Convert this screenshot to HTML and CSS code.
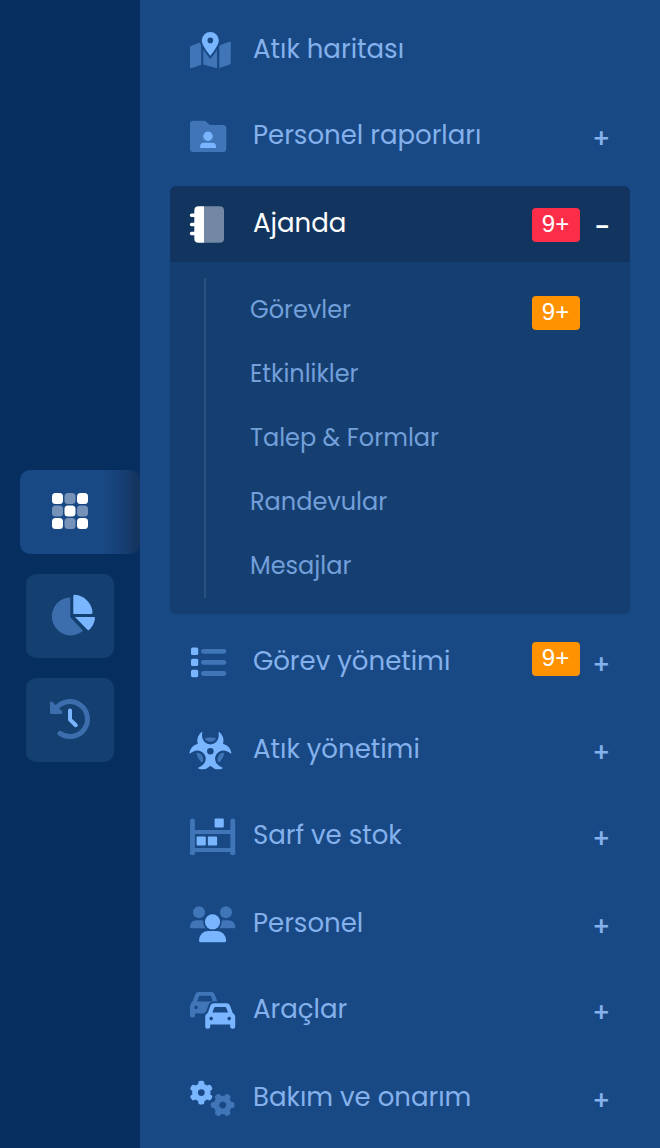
FILE: index.html
```html
<!DOCTYPE html>
<html lang="tr">
<head>
    <meta charset="UTF-8">
    <meta name="viewport" content="width=device-width, initial-scale=1.0">
    <title>Menü</title>
    <link rel="stylesheet" href="styles.css">
</head>
<body>
    <div class="rail">
        <a class="railBtn active">
            <svg width="36" height="36" viewBox="0 0 36 36">
                <g class="light">
                    <rect x="0" y="0" width="11" height="11" rx="3.5"/><rect x="25" y="0" width="11" height="11" rx="3.5"/>
                    <rect x="12.5" y="12.5" width="11" height="11" rx="3.5"/>
                    <rect x="0" y="25" width="11" height="11" rx="3.5"/><rect x="25" y="25" width="11" height="11" rx="3.5"/>
                </g>
                <g class="dim">
                    <rect x="12.5" y="0" width="11" height="11" rx="3.5"/><rect x="0" y="12.5" width="11" height="11" rx="3.5"/>
                    <rect x="25" y="12.5" width="11" height="11" rx="3.5"/><rect x="12.5" y="25" width="11" height="11" rx="3.5"/>
                </g>
            </svg>
        </a>
        <a class="railBtn">
            <svg width="50" height="48" viewBox="0 0 50 48">
                <path class="dim" d="M22.8 5.5Q24.3 5.3 24.3 6.8V25.3L36.4 38Q37.2 38.9 36.2 39.6A19 19 0 1 1 22.8 5.5Z"/>
                <path class="light" d="M27.3 4.2Q27.3 2.7 28.8 2.8A19.2 19.2 0 0 1 46.6 20.6Q46.7 22 45.3 22H27.3Z"/>
                <path class="light" d="M29 25H47.8Q49.2 25 49 26.4A19.5 19.5 0 0 1 43.3 37.7Q42.3 38.6 41.4 37.7Z"/>
            </svg>
        </a>
        <a class="railBtn">
            <svg width="50" height="48" viewBox="0 0 50 48">
                <path class="dimLine" d="M10 12.5A17.5 17.5 0 1 1 14 37.4" stroke-width="5"/>
                <path class="dim" d="M4 7Q4.2 4.8 6.4 6L16 15.2Q17 17.8 14.8 18H5.6Q4 18 4 16.4Z"/>
                <path class="lightLine" d="M24 14.6V23.6L29.8 29.2" stroke-width="4"/>
            </svg>
        </a>
    </div>
    <ul class="menu">
        <li class="item">
            <svg class="icon" viewBox="0 0 46 40">
                <path class="dim" d="M0 17.2Q0 16.3.9 15.9L11.2 12V34.8L1.4 38.2Q0 38.6 0 37.2ZM13.3 12L27 16V38.2L13.3 34.4ZM29.3 15.4L39.3 11.8Q40.8 11.4 40.8 12.8V33Q40.8 34 39.8 34.4L29.3 38Z"/>
                <path class="light cut" d="M20.3 25.7C18 22.8 11.8 15 11.8 10.4A8.5 8.4 0 0 1 28.8 10.4C28.8 15 22.6 22.8 20.3 25.7Z"/>
                <circle class="hole" cx="20.3" cy="10.4" r="2.8"/>
            </svg>
            <span class="text">Atık haritası</span>
        </li>
        <li class="item">
            <svg class="icon" viewBox="0 -1 46 40">
                <path class="dim" d="M3.5 3.7H14Q15.4 3.7 16.5 4.8L18.6 7Q19.6 8 21 8H33Q36.3 8 36.3 11.3V31.7Q36.3 35 33 35H3.5Q0 35 0 31.7V7Q0 3.7 3.5 3.7Z"/>
                <circle class="light" cx="18" cy="19.3" r="4.7"/>
                <path class="light" d="M14 25.7H22Q26 25.7 26.2 30Q26.2 31 25.2 31H11Q10 31 10 30Q10.2 25.7 14 25.7Z"/>
            </svg>
            <span class="text">Personel raporları</span>
            <span class="sign">+</span>
        </li>
        <li class="group">
            <div class="item open">
                <svg class="icon" viewBox="0 0 46 40">
                    <path class="dim" d="M14 2.2H29.7Q34 2.2 34 6.5V34.5Q34 38.8 29.7 38.8H14Z"/>
                    <path class="light" d="M8.6 2.2H14V38.8H8.6Q4.3 38.8 4.3 34.5V6.5Q4.3 2.2 8.6 2.2Z"/>
                    <path class="lightLine" d="M1.5 11.2H7M1.5 20.5H7M1.5 29.5H7" stroke-width="3.4"/>
                </svg>
                <span class="text">Ajanda</span>
                <span class="badge red">9+</span>
                <span class="sign minus">-</span>
            </div>
            <ul class="sub">
                <li>Görevler<span class="badge orange">9+</span></li>
                <li>Etkinlikler</li>
                <li>Talep &amp; Formlar</li>
                <li>Randevular</li>
                <li>Mesajlar</li>
            </ul>
        </li>
        <li class="item">
            <svg class="icon" viewBox="0 -.6 46 40">
                <g class="light">
                    <rect x="1" y="5" width="7.2" height="7.4" rx="1.6"/><rect x="1" y="16.1" width="7.2" height="7.4" rx="1.6"/><rect x="1" y="27.2" width="7.2" height="7.4" rx="1.6"/>
                </g>
                <g class="dim">
                    <rect x="11" y="6.3" width="25.3" height="4.8" rx="2.4"/><rect x="11" y="17.4" width="25.3" height="4.8" rx="2.4"/><rect x="11" y="28.5" width="25.3" height="4.8" rx="2.4"/>
                </g>
            </svg>
            <span class="text">Görev yönetimi</span>
            <span class="badge orange up">9+</span>
            <span class="sign">+</span>
        </li>
        <li class="item">
            <svg class="icon" viewBox="0 0 46 40">
                <g transform="translate(20.4 21.2) scale(.94)">
                    <g class="dim">
                        <path id="seg" d="M-5.8-13.2Q-5-14.8 0-14.8Q5-14.8 5.8-13.2Q4.2-10 0-10Q-4.2-10-5.8-13.2Z"/>
                        <use href="#seg" transform="rotate(120)"/>
                        <use href="#seg" transform="rotate(240)"/>
                    </g>
                    <g class="light">
                        <path id="horn" d="M-9.4-20.4A12 12 0 0 0-4 .8L0 3L4 .8A12 12 0 0 0 9.4-20.4L8.6-19.8Q9-18.6 8.8-15.8A8.8 8.6 0 0 1-8.8-15.8Q-9-18.6-8.6-19.8Z"/>
                        <use href="#horn" transform="rotate(120)"/>
                        <use href="#horn" transform="rotate(240)"/>
                    </g>
                    <circle class="hole" r="3.5"/>
                </g>
            </svg>
            <span class="text">Atık yönetimi</span>
            <span class="sign">+</span>
        </li>
        <li class="item">
            <svg class="icon" viewBox="0 -1 46 40">
                <path class="dimLine" d="M2.5 3.8V35.8M42.8 3.8V35.8" stroke-width="4.8"/>
                <path class="dim" d="M0 34H4.9V37.6H0ZM40.4 34H45.2V37.6H40.4ZM3 13H42V17H3ZM3 31H42V35H3Z"/>
                <g class="light">
                    <rect x="24.6" y="1.4" width="9.2" height="9.2" rx="1"/><rect x="6.6" y="19.4" width="9.2" height="9.2" rx="1"/><rect x="17.9" y="19.4" width="9.2" height="9.2" rx="1"/>
                </g>
            </svg>
            <span class="text">Sarf ve stok</span>
            <span class="sign">+</span>
        </li>
        <li class="item">
            <svg class="icon" viewBox="0 -.4 46 40">
                <g class="dim">
                    <circle cx="9" cy="7.8" r="6"/><circle cx="36" cy="7.8" r="6"/>
                    <path d="M6.5 15.8H11.5Q13 15.8 13.4 16.4Q13 20.5 15.6 23.8H1.4Q0 23.8 0 22.3Q.6 15.8 6.5 15.8ZM38.7 15.8H33.7Q32.2 15.8 31.4 16.4Q31.8 20.5 29.4 23.8H43.8Q45.2 23.8 45.2 22.3Q44.6 15.8 38.7 15.8Z"/>
                </g>
                <circle class="light cutThin" cx="22.5" cy="17.4" r="7.6"/>
                <path class="light" d="M18 26.5H27Q35.4 27.2 36.2 36.2Q36.2 37.8 34.6 37.8H10.4Q9 37.8 9 36.2Q9.6 27.2 18 26.5Z"/>
            </svg>
            <span class="text">Personel</span>
            <span class="sign">+</span>
        </li>
        <li class="item">
            <svg class="icon" viewBox="0 -1.4 46 40">
                <g transform="translate(-15.2 -11.2)">
                    <path class="dim" fill-rule="evenodd" d="M24 11.8H36.5Q39 11.8 40 14.2L42.5 21Q45.2 22.8 45.2 26V35.3Q45.2 37.4 43 37.4H42.4Q40.2 37.4 40.2 35.3V33.2H20.2V35.3Q20.2 37.4 18 37.4H17.4Q15.2 37.4 15.2 35.3V26Q15.2 22.8 18 21L20.4 14.2Q21.4 11.8 24 11.8ZM25.3 15.6Q24.4 15.6 24 16.5L22.4 21.2H38L36.4 16.5Q36 15.6 35.1 15.6ZM19.4 27.2A1.8 1.8 0 1 0 23 27.2A1.8 1.8 0 1 0 19.4 27.2ZM37.4 27.2A1.8 1.8 0 1 0 41 27.2A1.8 1.8 0 1 0 37.4 27.2Z"/>
                </g>
                <path class="hole cut" d="M24 11.8H36.5Q39 11.8 40 14.2L42.5 21Q45.2 22.8 45.2 26V37H15.2V26Q15.2 22.8 18 21L20.4 14.2Q21.4 11.8 24 11.8Z"/>
                <path class="light" fill-rule="evenodd" d="M24 11.8H36.5Q39 11.8 40 14.2L42.5 21Q45.2 22.8 45.2 26V35.3Q45.2 37.4 43 37.4H42.4Q40.2 37.4 40.2 35.3V33.2H20.2V35.3Q20.2 37.4 18 37.4H17.4Q15.2 37.4 15.2 35.3V26Q15.2 22.8 18 21L20.4 14.2Q21.4 11.8 24 11.8ZM25.3 15.6Q24.4 15.6 24 16.5L22.4 21.2H38L36.4 16.5Q36 15.6 35.1 15.6ZM19.4 27.2A1.8 1.8 0 1 0 23 27.2A1.8 1.8 0 1 0 19.4 27.2ZM37.4 27.2A1.8 1.8 0 1 0 41 27.2A1.8 1.8 0 1 0 37.4 27.2Z"/>
            </svg>
            <span class="text">Araçlar</span>
            <span class="sign">+</span>
        </li>
        <li class="item">
            <svg class="icon" viewBox="0 -.6 46 40">
                <g class="light" transform="translate(11.3 14)">
                    <g id="gear">
                        <circle r="9.2"/>
                        <rect id="tooth" x="-3" y="-11.8" width="6" height="23.6" rx="2"/>
                        <use href="#tooth" transform="rotate(60)"/>
                        <use href="#tooth" transform="rotate(120)"/>
                    </g>
                    <circle class="hole" r="3.4"/>
                </g>
                <g class="dim" transform="translate(32.7 26.4) rotate(30)">
                    <use href="#gear"/>
                    <circle class="hole" r="3.4"/>
                </g>
            </svg>
            <span class="text">Bakım ve onarım</span>
            <span class="sign">+</span>
        </li>
    </ul>
</body>
</html>
```
FILE: styles.css
```css
* {
    box-sizing: border-box;
}

body {
    margin: 0;
    display: flex;
    height: 1148px;
    overflow: hidden;
    background-color: #194985;
    font-family: Poppins, Inter, sans-serif;
    color: #84b1ec;
}

ul {
    list-style: none;
    margin: 0;
    padding: 0;
}

svg {
    display: block;
    flex: none;
    overflow: visible;
}

/* icon colours */
.light {
    fill: #7ab5ff;
}

.dim {
    fill: #4075b8;
}

.lightLine, .dimLine {
    fill: none;
    stroke: #7ab5ff;
    stroke-linecap: round;
    stroke-linejoin: round;
}

.dimLine {
    stroke: #4075b8;
}

.hole {
    fill: #194985;
}

.cut, .cutThin {
    stroke: #194985;
    stroke-width: 4px;
    paint-order: stroke;
}

.cutThin {
    stroke-width: 3px;
}

.active .light, .open .light {
    fill: #fff;
}

.open .lightLine {
    stroke: #fff;
}

.open .dim {
    fill: #7388a3;
}

/* left rail */
.rail {
    width: 140px;
    flex: none;
    padding-top: 470px;
    background-color: #062f5f;
}

.rail .dim {
    fill: #3c6eae;
}

.rail .active .dim {
    fill: #7792b8;
}

.rail .dimLine {
    stroke: #3c6eae;
}

.railBtn {
    display: flex;
    align-items: center;
    width: 88px;
    height: 84px;
    margin: 0 0 20px 26px;
    padding-left: 20px;
    border-radius: 10px;
    background-color: #143f71;
}

.railBtn.active {
    width: 120px;
    margin-left: 20px;
    padding: 0 0 2px 32px;
    border-radius: 10px;
    background: linear-gradient(to right, #194985 68%, #17427a 80%, #14335d 100%);
}

/* menu */
.menu {
    flex: 1;
    padding: 12px 30px 0;
}

.item {
    display: flex;
    align-items: center;
    height: 76px;
    margin-bottom: 10px;
    padding: 0 20px;
}

.item:nth-child(even) {
    margin-bottom: 12px;
}

.icon {
    width: 46px;
    height: 40px;
}

.text {
    flex: 1;
    margin-left: 17px;
    padding-bottom: 2px;
    font-size: 26px;
    line-height: 40px;
    white-space: nowrap;
}

.group {
    height: 428px;
    margin-bottom: 10px;
    border-radius: 6px;
    overflow: hidden;
    background-color: #153f71;
}

.item.open {
    margin: 0;
    background-color: #123560;
    color: #fff;
}

.sign {
    width: 18px;
    margin-left: 12px;
    padding-top: 6px;
    font-size: 26px;
    font-weight: 500;
    line-height: 30px;
    text-align: center;
}

.minus {
    width: 16px;
    margin-left: 14px;
    padding-top: 7px;
    font-size: 28px;
}

.badge {
    width: 48px;
    height: 34px;
    margin-top: 2px;
    padding-right: 1px;
    border-radius: 4px;
    color: #fff;
    font-family: "Liberation Sans", Arial, sans-serif;
    font-size: 24px;
    line-height: 32px;
    text-align: center;
}

.red {
    background-color: #fc2d49;
}

.orange {
    background-color: #ff9200;
}

.up {
    margin: 0 0 6px;
}

.sub {
    margin: 16px 0 0 34px;
    border-left: 2px solid #2b507e;
}

.sub li {
    display: flex;
    align-items: center;
    justify-content: space-between;
    height: 64px;
    padding: 0 50px 2px 44px;
    font-size: 24px;
    color: #739fda;
}

.sub .badge {
    margin-top: 8px;
}
```
